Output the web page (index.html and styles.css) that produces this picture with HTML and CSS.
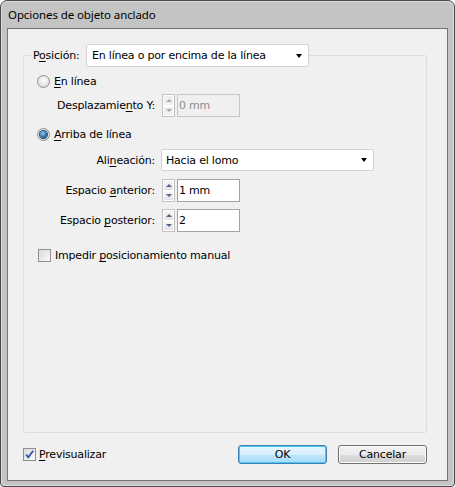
FILE: index.html
```html
<!DOCTYPE html>
<html lang="es">
<head>
    <meta charset="UTF-8">
    <title>Opciones de objeto anclado</title>
    <link rel="stylesheet" href="styles.css">
</head>
<body>
    <div class="window">
        <div class="titlebar">Opciones de objeto anclado</div>

        <div class="client">
            <fieldset class="group">
                <legend class="group-head">
                    <span class="legend-label">P<u>o</u>sición:</span>
                    <div class="select select-wide">
                        <span>En línea o por encima de la línea</span>
                        <i class="caret"></i>
                    </div>
                </legend>

                <div class="opt opt-first">
                    <span class="radio"></span>
                    <span><u>E</u>n línea</span>
                </div>
                <div class="field field-offset">
                    <span class="label">Desplazamie<u>n</u>to Y:</span>
                    <div class="spin disabled"><span class="up"></span><span class="down"></span></div>
                    <div class="input disabled">0 mm</div>
                </div>

                <div class="opt opt-above">
                    <span class="radio on"></span>
                    <span><u>A</u>rriba de línea</span>
                </div>
                <div class="field field-align">
                    <span class="label">Ali<u>n</u>eación:</span>
                    <div class="select select-align">
                        <span>Hacia el lomo</span>
                        <i class="caret"></i>
                    </div>
                </div>
                <div class="field field-before">
                    <span class="label">Espacio <u>a</u>nterior:</span>
                    <div class="spin"><span class="up"></span><span class="down"></span></div>
                    <div class="input">1 mm</div>
                </div>
                <div class="field field-after">
                    <span class="label">Espacio <u>p</u>osterior:</span>
                    <div class="spin"><span class="up"></span><span class="down"></span></div>
                    <div class="input">2</div>
                </div>

                <div class="opt opt-prevent">
                    <span class="check"></span>
                    <span>Impedir <u>p</u>osicionamiento manual</span>
                </div>
            </fieldset>

            <div class="footer">
                <span class="check on">
                    <svg width="11" height="11" viewBox="0 0 11 11"><path d="M2 5.5 L4.3 8.3 L9.2 1.8" fill="none" stroke="#2f54a6" stroke-width="1.8"/></svg>
                </span>
                <span><u>P</u>revisualizar</span>
                <div class="buttons">
                    <div class="btn btn-default">OK</div>
                    <div class="btn">Cancelar</div>
                </div>
            </div>
        </div>
    </div>
</body>
</html>
```

FILE: styles.css
```css
body {
    margin: 0;
    font-family: "DejaVu Sans", sans-serif;
    font-size: 11px;
    letter-spacing: -0.2px;
    color: #000;
    background: #fff;
}

u {
    text-underline-offset: 2px;
}

.window {
    width: 455px;
    height: 487px;
    box-sizing: border-box;
    border: 1px solid #4a4a4a;
    border-radius: 7px 7px 4px 4px;
    background: #c4c4c4;
    box-shadow: inset 0 0 0 1px #dcdcdc;
    padding: 0 6px 5px;
    display: flex;
    flex-direction: column;
}

.titlebar {
    height: 27px;
    line-height: 27px;
    padding-left: 1px;
    font-family: "Noto Sans", sans-serif;
    font-size: 11.5px;
    letter-spacing: -0.1px;
}

.client {
    flex: 1;
    border: 1px solid #747474;
    background: #f0f0f0;
    display: flex;
    flex-direction: column;
}

/* group box */
.group {
    flex: 1;
    margin: 15px 20px 0 15px;
    padding: 0;
    border: 1px solid #d5dfe5;
    border-radius: 3px;
    min-width: 0;
}

.group-head {
    display: flex;
    align-items: center;
    margin-left: 8px;
    padding: 0;
}

.legend-label {
    width: 54px;
    padding-left: 1px;
    box-sizing: border-box;
}

.select {
    display: flex;
    align-items: center;
    box-sizing: border-box;
    background: #fff;
    border: 1px solid #d3d3d3;
    border-radius: 2px;
    padding-left: 5px;
}

.select-wide {
    width: 223px;
    height: 23px;
}

.select-align {
    width: 213px;
    height: 22px;
    padding-left: 4px;
}

.caret {
    margin-left: auto;
    margin-right: 6px;
    width: 0;
    height: 0;
    border-left: 3px solid transparent;
    border-right: 3px solid transparent;
    border-top: 4px solid #000;
}

/* rows */
.opt {
    display: flex;
    align-items: center;
    height: 17px;
    padding-left: 13px;
}

.opt-first { margin-top: 6px; }
.opt-above { margin-top: 9px; }
.opt-prevent { margin-top: 15px; padding-left: 14px; }

.field {
    display: flex;
    align-items: center;
    height: 23px;
}

.field-offset { margin-top: 4px; }
.field-align { margin-top: 6px; height: 22px; }
.field-before { margin-top: 8px; }
.field-after { margin-top: 7px; }

.label {
    width: 131px;
    text-align: right;
    margin-right: 7px;
    white-space: nowrap;
}

.field-align .label {
    margin-right: 6px;
}

/* spinner + text box */
.spin {
    width: 13px;
    height: 23px;
    box-sizing: border-box;
    border: 1px solid #c2c2c2;
    margin-right: 2px;
    display: flex;
    flex-direction: column;
    background: #fff;
}

.spin span {
    flex: 1;
    display: flex;
    align-items: center;
    justify-content: center;
    background: linear-gradient(#f6f6f6, #e3e3e3);
    border: 1px solid #fff;
}

.spin span::after {
    content: "";
    width: 0;
    height: 0;
    border-left: 3px solid transparent;
    border-right: 3px solid transparent;
}

.spin .up::after { border-bottom: 3px solid #4f6589; }
.spin .down::after { border-top: 3px solid #4f6589; }

.spin.disabled span { background: #f0f0f0; }
.spin.disabled .up::after { border-bottom-color: #a9a9a9; }
.spin.disabled .down::after { border-top-color: #a9a9a9; }

.input {
    width: 63px;
    height: 23px;
    box-sizing: border-box;
    border: 1px solid #a3a3a3;
    background: #fff;
    padding-left: 1px;
    display: flex;
    align-items: center;
}

.input.disabled {
    border-color: #c6c6c6;
    background: transparent;
    color: #8d8d8d;
}

/* radio and check */
.radio {
    width: 13px;
    height: 13px;
    box-sizing: border-box;
    border-radius: 50%;
    border: 1px solid #8e8f8f;
    background: radial-gradient(circle at 50% 40%, #fdfdfd, #d4d4d4);
    margin-right: 4px;
    display: flex;
    align-items: center;
    justify-content: center;
}

.radio.on::after {
    content: "";
    width: 7px;
    height: 7px;
    border-radius: 50%;
    background: radial-gradient(circle at 40% 35%, #8fd2f6, #1b5690 70%);
    box-shadow: 0 0 0 1px #23496e;
}

.check {
    width: 13px;
    height: 13px;
    box-sizing: border-box;
    border: 1px solid #8e8f8f;
    background: linear-gradient(135deg, #dadada, #fbfbfb);
    margin-right: 4px;
    display: flex;
    align-items: center;
    justify-content: center;
}

.check.on {
    margin-right: 3px;
}

/* footer */
.footer {
    height: 19px;
    margin: 12px 20px 16px 15px;
    display: flex;
    align-items: center;
}

.buttons {
    margin-left: auto;
    display: flex;
    gap: 11px;
}

.btn {
    width: 89px;
    height: 19px;
    box-sizing: border-box;
    border: 1px solid #707070;
    border-radius: 3px;
    background: linear-gradient(#f2f2f2 0%, #ebebeb 50%, #dddddd 50%, #cfcfcf 100%);
    box-shadow: inset 0 0 0 1px #fbfbfb;
    display: flex;
    align-items: center;
    justify-content: center;
}

.btn-default {
    border-color: #3c7fb1;
    background: linear-gradient(#e9f6fd 0%, #d8f0fc 50%, #bee6fd 50%, #a8dbf7 100%);
    box-shadow: inset 0 0 0 1px #4cc6f6;
}
```
